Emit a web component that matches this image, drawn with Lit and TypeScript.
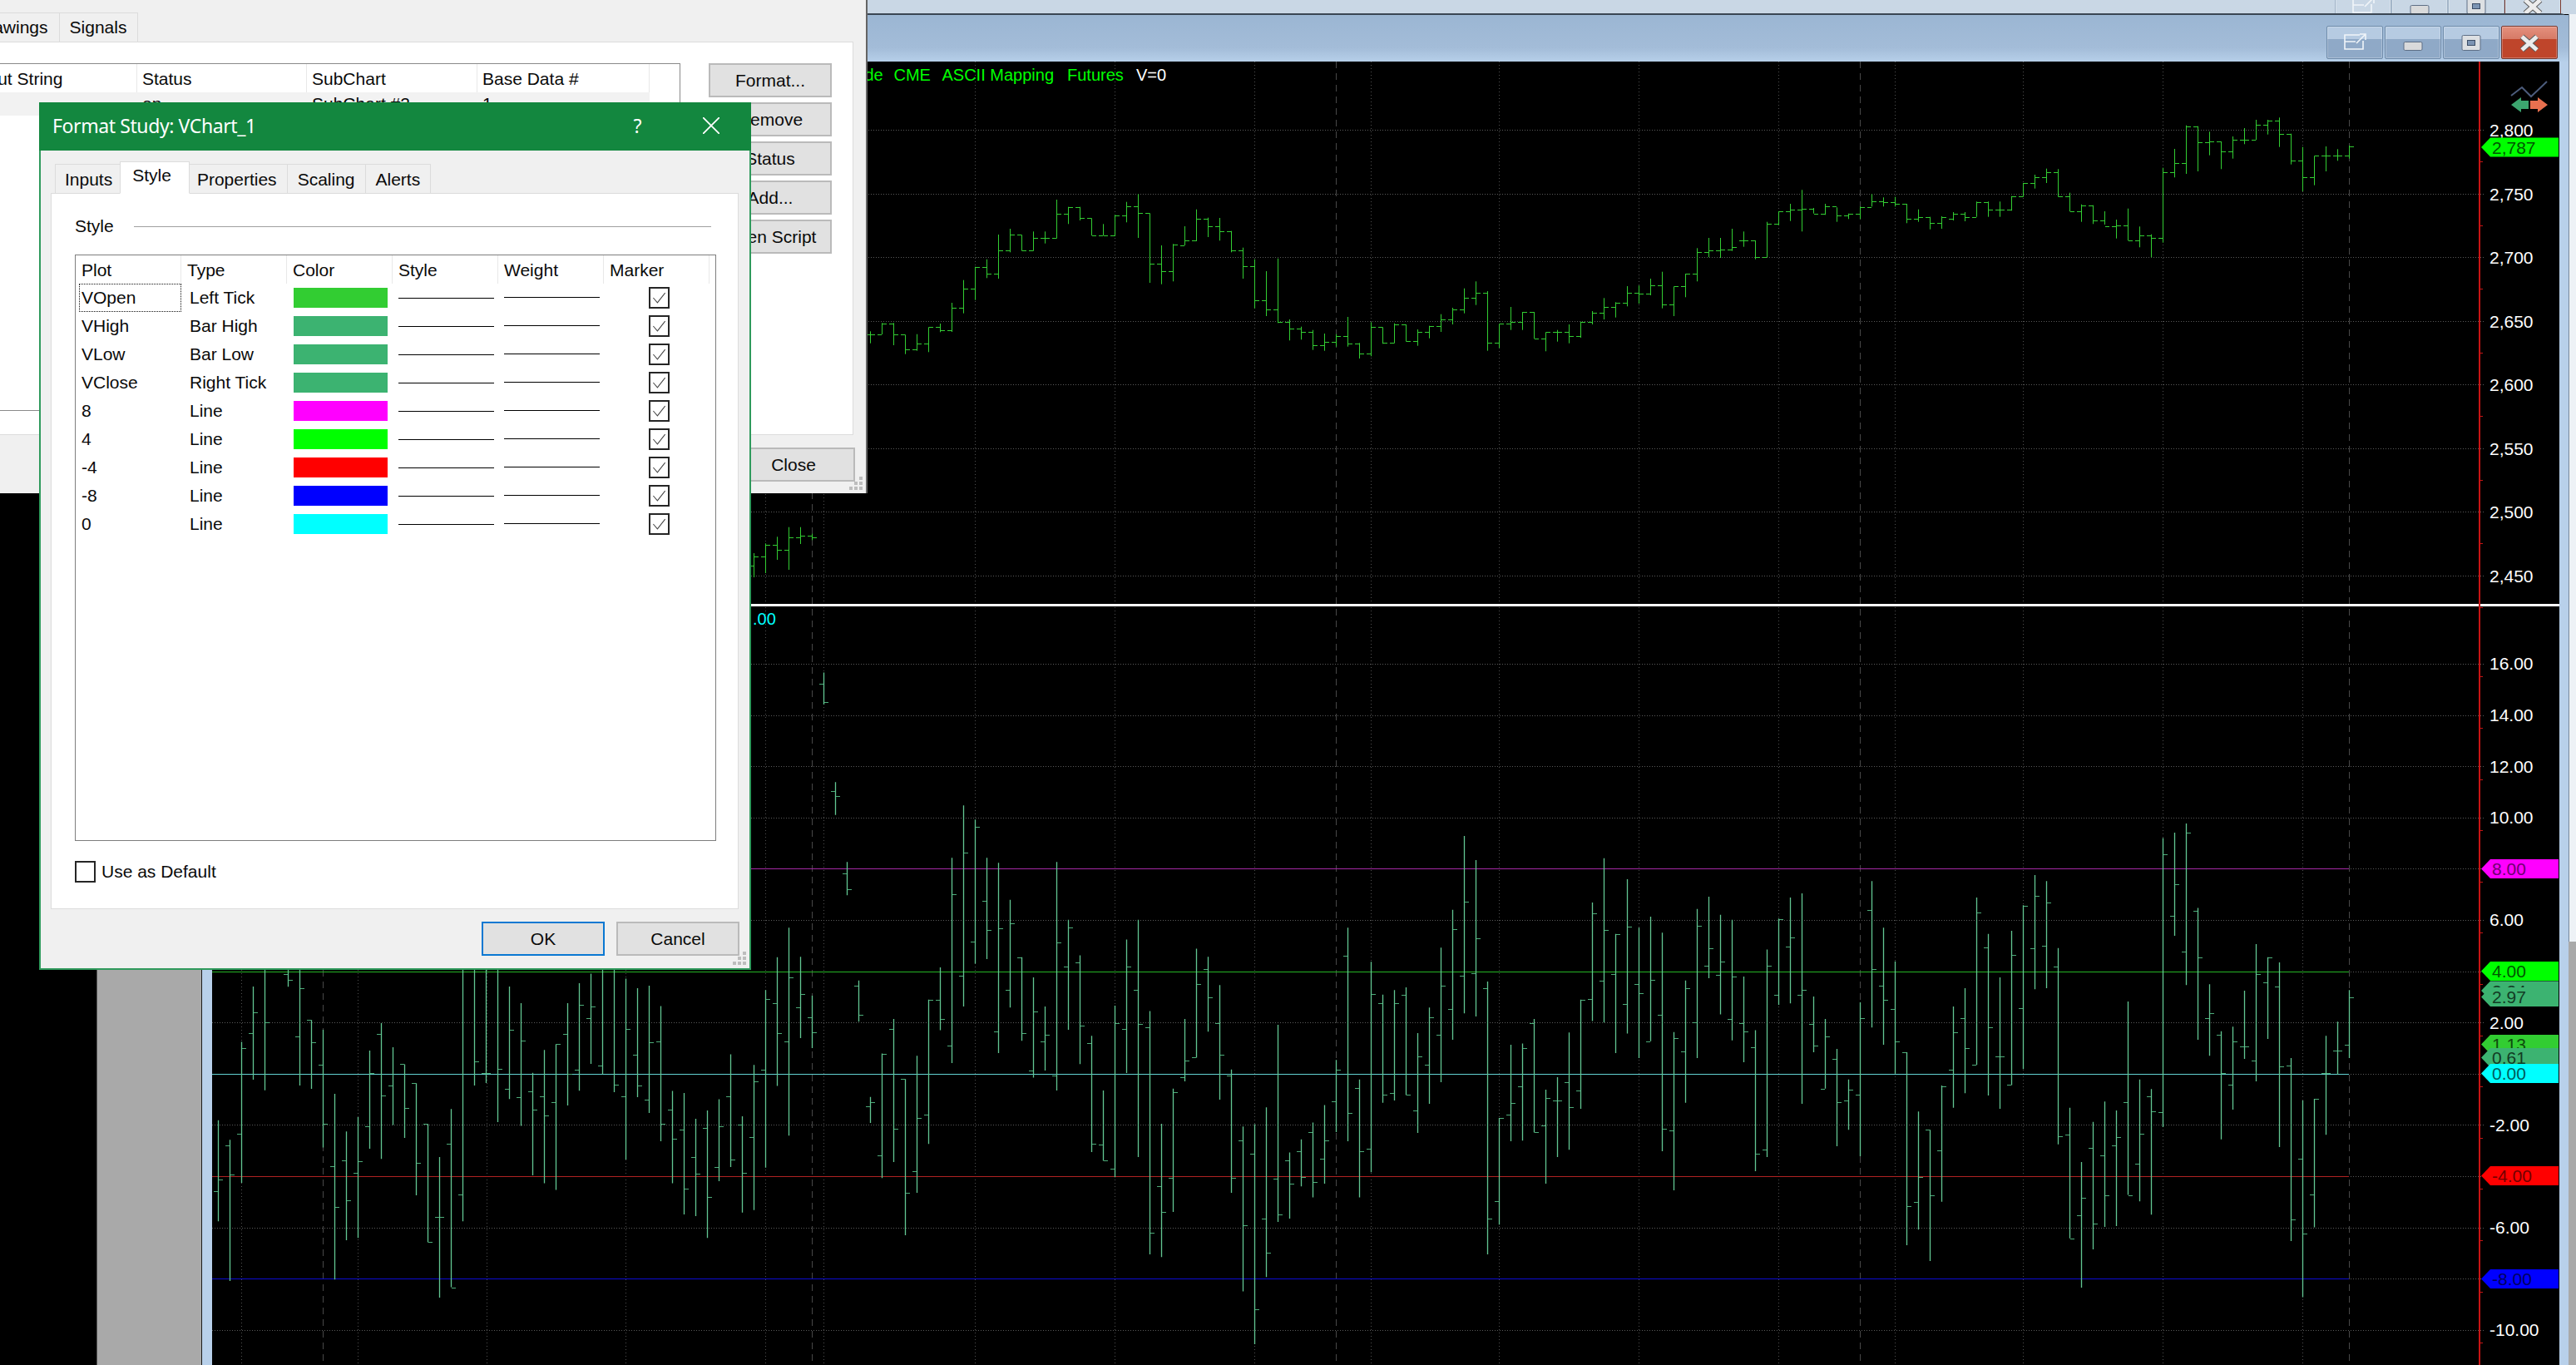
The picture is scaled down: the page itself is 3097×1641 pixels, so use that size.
import { LitElement, html, css, svg } from 'lit';
import { customElement } from 'lit/decorators.js';

// bars are [high, low, left tick, right tick], read off the screenshot.
// one bar every 14px, first bar at x=262
type Bar = number[];

const barX = (i: number) => 262 + 14 * i;

// upper pane, y = value / 3
const PRICE_46: Bar[] = [
  [1995, 2082, 2040, 2007], [1960, 2067, 2007, 1966], [1936, 2019, 1966, 1984], [1901, 2055, 1984, 1939],
  [1901, 1962, 1939, 1931], [1925, 1948, 1931, 1939],
];
const PRICE_56: Bar[] = [
  [1195, 1238, 1207, 1207], [1165, 1206, 1207, 1167], [1165, 1245, 1167, 1207], [1207, 1277, 1207, 1260],
  [1205, 1265, 1259, 1238], [1180, 1270, 1238, 1180], [1167, 1198, 1180, 1190], [1092, 1197, 1190, 1111],
  [1010, 1130, 1111, 1040], [962, 1082, 1040, 962], [935, 1003, 963, 986], [846, 1005, 986, 902],
  [825, 910, 902, 847], [847, 905, 847, 902], [835, 905, 902, 859], [835, 878, 859, 857],
  [720, 860, 857, 772], [746, 808, 772, 746], [746, 795, 746, 787], [787, 850, 787, 848],
  [808, 850, 848, 850], [775, 852, 850, 777], [728, 802, 777, 745], [700, 858, 745, 769],
  [769, 1020, 769, 952], [885, 1025, 952, 979], [880, 1015, 979, 882], [816, 885, 884, 868],
  [755, 870, 868, 790], [785, 855, 790, 815], [786, 868, 815, 833], [833, 910, 833, 902],
  [893, 1005, 902, 961], [935, 1112, 961, 1083], [978, 1140, 1083, 1117], [932, 1165, 1117, 1160],
  [1152, 1228, 1160, 1186], [1178, 1225, 1186, 1196], [1190, 1262, 1196, 1246], [1203, 1265, 1246, 1232],
  [1205, 1250, 1232, 1213], [1143, 1250, 1213, 1238], [1237, 1293, 1238, 1274], [1162, 1285, 1274, 1180],
  [1180, 1240, 1180, 1235], [1166, 1238, 1235, 1170], [1170, 1232, 1170, 1231], [1188, 1247, 1231, 1198],
  [1175, 1220, 1198, 1177], [1133, 1197, 1177, 1153], [1110, 1170, 1153, 1116], [1040, 1130, 1116, 1075],
  [1015, 1100, 1075, 1055], [1050, 1265, 1055, 1237], [1168, 1255, 1237, 1167], [1107, 1190, 1167, 1160],
  [1125, 1190, 1160, 1125], [1125, 1222, 1125, 1222], [1198, 1267, 1222, 1198], [1190, 1232, 1198, 1197],
  [1170, 1238, 1197, 1212], [1160, 1218, 1212, 1162], [1122, 1170, 1162, 1128], [1075, 1152, 1128, 1108],
  [1090, 1145, 1108, 1092], [1032, 1105, 1092, 1057], [1030, 1095, 1057, 1060], [1005, 1065, 1060, 1028],
  [980, 1112, 1028, 1099], [1033, 1140, 1099, 1033], [987, 1072, 1033, 987], [895, 1015, 987, 910],
  [858, 928, 910, 902], [858, 930, 902, 900], [825, 905, 900, 892], [835, 890, 867, 867],
  [867, 935, 867, 927], [800, 928, 927, 808], [762, 812, 808, 762], [735, 797, 762, 757],
  [685, 835, 757, 753], [750, 770, 753, 770], [735, 775, 770, 745], [748, 800, 745, 778],
  [770, 790, 778, 772], [745, 790, 772, 748], [700, 745, 748, 727], [712, 745, 727, 730],
  [710, 745, 730, 735], [735, 805, 735, 790], [755, 800, 790, 782], [782, 827, 782, 805],
  [780, 825, 805, 782], [765, 795, 788, 770], [765, 798, 770, 782], [727, 782, 782, 729],
  [727, 782, 729, 757], [727, 782, 757, 757], [707, 760, 757, 708], [660, 710, 708, 660],
  [630, 680, 660, 638], [608, 660, 638, 621], [610, 710, 621, 708], [695, 763, 708, 763],
  [737, 800, 763, 741], [740, 808, 741, 795], [762, 810, 795, 816], [792, 860, 816, 814],
  [752, 868, 814, 868], [817, 892, 868, 850], [845, 928, 850, 858], [605, 875, 858, 622],
  [537, 640, 622, 589], [452, 627, 589, 457], [455, 618, 457, 513], [475, 560, 513, 510],
  [510, 610, 510, 547], [492, 572, 547, 505], [462, 520, 505, 505], [432, 505, 505, 450],
  [432, 485, 450, 436], [424, 530, 436, 482], [482, 593, 482, 579], [530, 690, 579, 639],
  [562, 668, 639, 562], [528, 618, 562, 562], [538, 580, 562, 562], [525, 572, 562, 528],
];

// lower pane, bars 0..45 (y = 1100 + v / 2.898), mostly behind the dialog
const OSC_0: Bar[] = [
  [715, 1067, 963, 923], [783, 1275, 804, 905], [442, 933, 763, 465], [249, 574, 412, 340],
  [100, 611, 0, 375], [0, 0, 0, 0], [100, 250, 207, 227], [100, 594, 424, 256],
  [366, 606, 366, 444], [400, 810, 523, 726], [623, 1270, 876, 1018], [754, 1133, 856, 995],
  [704, 1125, 897, 859], [472, 814, 737, 550], [377, 850, 415, 630], [461, 732, 595, 0],
  [520, 777, 520, 673], [586, 977, 586, 865], [728, 1140, 728, 1140], [843, 1333, 1053, 1053],
  [676, 1297, 798, 1297], [100, 1067, 975, 0], [100, 594, 0, 511], [100, 585, 550, 550],
  [100, 722, 0, 535], [249, 641, 607, 401], [307, 735, 636, 439], [550, 907, 613, 677],
  [470, 935, 633, 697], [450, 958, 653, 450], [307, 664, 413, 554], [238, 612, 538, 314],
  [204, 519, 360, 320], [100, 555, 525, 0], [100, 617, 0, 590], [222, 852, 633, 398],
  [255, 635, 488, 595], [246, 690, 644, 444], [317, 788, 441, 726], [613, 935, 679, 781],
  [620, 1043, 748, 952], [710, 1049, 842, 900], [681, 1125, 743, 982], [642, 927, 879, 737],
  [485, 878, 633, 853], [701, 1037, 731, 897],
];

// lower pane, bars 46..183 (y = 780 + v / 1.823)
const OSC_46: Bar[] = [
  [912, 1230, 1070, 948], [748, 1137, 923, 767], [676, 958, 777, 843], [611, 1067, 860, 720],
  [675, 853, 785, 757], [760, 875, 808, 840], [52, 122, 76, 117], [292, 364, 311, 322],
  [467, 540, 493, 526], [727, 817, 739, 803], [982, 1039, 1002, 994], [887, 1160, 1111, 888],
  [811, 1125, 833, 1051], [943, 1285, 943, 1193], [892, 1192, 1144, 1029], [769, 1085, 1020, 770],
  [698, 836, 769, 812], [458, 908, 869, 537], [343, 784, 716, 446], [374, 690, 641, 391],
  [458, 680, 552, 617], [469, 886, 838, 612], [550, 786, 748, 601], [676, 859, 676, 843],
  [720, 940, 925, 794], [784, 924, 861, 845], [467, 968, 935, 644], [594, 835, 697, 611],
  [672, 910, 688, 825], [848, 1103, 865, 1084], [968, 1122, 1087, 1122], [782, 1158, 1139, 820],
  [637, 930, 833, 697], [594, 1114, 748, 823], [794, 1327, 829, 1280], [1041, 1333, 1177, 1235],
  [964, 1234, 1160, 972], [811, 948, 938, 902], [657, 896, 896, 734], [675, 839, 701, 763],
  [737, 988, 821, 890], [922, 1192, 935, 1160], [1047, 1408, 1077, 1263], [1042, 1524, 1106, 1448],
  [1005, 1377, 1248, 1323], [824, 1256, 1162, 1239], [1104, 1249, 1122, 1173],
  [1075, 1178, 1101, 1158], [1038, 1202, 1059, 1169], [1000, 1172, 1118, 1078], [901, 1059, 991, 923],
  [611, 1079, 672, 1018], [944, 1202, 963, 1101], [686, 1147, 1095, 756], [758, 995, 777, 978],
  [748, 990, 974, 777], [742, 978, 758, 978], [842, 1061, 1011, 894], [786, 997, 912, 807],
  [655, 950, 845, 739], [572, 857, 789, 615], [410, 799, 717, 554], [463, 806, 711, 635],
  [729, 1327, 743, 1248], [1028, 1262, 1211, 1028], [868, 1079, 1020, 996], [865, 1078, 958, 875],
  [811, 1060, 820, 1060], [966, 1172, 1045, 984], [939, 1114, 990, 990], [841, 1098, 950, 1005],
  [769, 1008, 968, 770], [556, 816, 767, 580], [459, 819, 728, 617], [625, 886, 712, 626],
  [505, 843, 778, 609], [611, 897, 734, 754], [587, 860, 860, 725], [622, 1101, 802, 1051],
  [840, 1187, 1056, 854], [727, 995, 883, 743], [570, 897, 819, 607], [543, 722, 695, 657],
  [583, 801, 714, 685], [594, 858, 812, 719], [718, 906, 821, 838], [836, 1145, 874, 1106],
  [659, 1114, 1097, 694], [591, 780, 759, 592], [545, 777, 652, 633], [536, 997, 759, 747],
  [762, 884, 823, 869], [811, 964, 964, 849], [877, 1090, 898, 994],
  [944, 1054, 989, 967], [775, 1112, 978, 810], [509, 830, 573, 701], [611, 868, 739, 770],
  [685, 931, 790, 860], [884, 1307, 884, 1222], [1014, 1273, 1213, 1157], [1054, 1342, 1054, 1197],
  [957, 1212, 1099, 958], [784, 1006, 922, 840], [744, 974, 810, 875], [545, 912, 912, 577],
  [625, 979, 655, 830], [720, 1008, 894, 894], [618, 956, 956, 670], [562, 921, 787, 563],
  [496, 746, 656, 541], [509, 744, 650, 556], [656, 1086, 697, 1068], [1006, 1292, 1064, 1292],
  [1125, 1400, 1242, 1204], [1037, 1316, 1093, 1259], [992, 1267, 1111, 1197], [1012, 1265, 1089, 1071],
  [773, 1197, 993, 1197], [944, 1211, 1128, 1062], [965, 1240, 980, 1013], [415, 1048, 1015, 450],
  [403, 629, 586, 515], [383, 737, 663, 402], [568, 857, 575, 676], [735, 892, 809, 799],
  [838, 1075, 846, 929], [828, 1010, 956, 860], [749, 899, 871, 871], [647, 948, 902, 712],
  [676, 855, 731, 677], [687, 1092, 741, 916], [897, 1298, 914, 1250], [990, 1421, 1117, 1281],
  [986, 1268, 1195, 987], [848, 1065, 929, 929], [817, 933, 881, 881], [748, 897, 867, 763],
];

function barStems(bars: Bar[], first: number, toY: (v: number) => number) {
  return bars
    .map((b, n) => (b[0] ? `M${barX(first + n) + 0.5} ${toY(b[0]).toFixed(1)}V${toY(b[1]).toFixed(1)}` : ''))
    .join('');
}

function barTicks(bars: Bar[], first: number, toY: (v: number) => number) {
  return bars
    .map((b, n) => {
      const x = barX(first + n);
      const l = b[2] ? `M${x - 5} ${Math.round(toY(b[2])) + 0.5}H${x}` : '';
      const r = b[3] ? `M${x + 1} ${Math.round(toY(b[3])) + 0.5}H${x + 6}` : '';
      return l + r;
    })
    .join('');
}

const topY = (v: number) => v / 3;
const oscY0 = (v: number) => 1100 + v / 2.898;
const oscY = (v: number) => 780 + v / 1.823;
const valueY = (v: number) => 1290.7 - 30.8 * v;

const PRICE_STEMS = barStems(PRICE_46, 46, topY) + barStems(PRICE_56, 56, topY);
const PRICE_TICKS = barTicks(PRICE_46, 46, topY) + barTicks(PRICE_56, 56, topY);
const OSC_STEMS = barStems(OSC_0, 0, oscY0) + barStems(OSC_46, 46, oscY);
const OSC_TICKS = barTicks(OSC_0, 0, oscY0) + barTicks(OSC_46, 46, oscY);

const PRICE_LEVELS = [
  ['2,800', 156], ['2,750', 233], ['2,700', 309], ['2,650', 386],
  ['2,600', 462], ['2,550', 539], ['2,500', 615], ['2,450', 692],
] as [string, number][];
const OSC_LEVELS = [16, 14, 12, 10, 8, 6, 4, 2, 0, -2, -4, -6, -8, -10];
const GRID_X = [290, 430, 585, 752, 920, 990, 1172, 1340, 1508, 1648, 1802, 1970, 2138, 2278, 2432, 2600, 2768];
const SESSION_X = [388, 976, 1606, 2236, 2824];

const LEVEL_LINES = [
  [8, '#a52aa5'], [4, '#25b525'], [0, '#62d2d2'], [-4, '#b02222'], [-8, '#0c0cd0'],
] as [number, string][];

const TAGS = [
  ['2,787', 177, '#00ff00', '#005500'],
  ['8.00', 1044.5, '#ff00ff', '#700070'],
  ['4.00', 1167.5, '#00ff00', '#005500'],
  ['3.24', 1191, '#3cb371', '#123c24'],
  ['2.97', 1198.5, '#3cb371', '#123c24'],
  ['1.13', 1255.5, '#32cd32', '#0e4a0e'],
  ['0.61', 1271.5, '#3cb371', '#123c24'],
  ['0.00', 1290.5, '#00ffff', '#005a5a'],
  ['-4.00', 1413.5, '#ff0000', '#700000'],
  ['-8.00', 1537.5, '#0000ff', '#000060'],
] as [string, number, string, string][];

const PLOTS = [
  ['VOpen', 'Left Tick', '#32cd32'],
  ['VHigh', 'Bar High', '#3cb371'],
  ['VLow', 'Bar Low', '#3cb371'],
  ['VClose', 'Right Tick', '#3cb371'],
  ['8', 'Line', '#ff00ff'],
  ['4', 'Line', '#00ff00'],
  ['-4', 'Line', '#ff0000'],
  ['-8', 'Line', '#0000ff'],
  ['0', 'Line', '#00ffff'],
];

const check = svg`<svg class="tick" viewBox="0 0 25 26"><path d="M4 13L10 20L21 6" /></svg>`;

const grip = html`<svg class="grip" width="18" height="18">
  <path d="M12 0h4v4h-4zM6 6h4v4h-4zM12 6h4v4h-4zM0 12h4v4h-4zM6 12h4v4h-4zM12 12h4v4h-4z" />
</svg>`;

const winIcons = {
  popout: svg`<path d="M40 11H22V28H44V18M22 19H35" fill="none" stroke="#f1f5f9" stroke-width="1.6" />
    <path d="M36 21L46 11M40 10H47V17" fill="none" stroke="#f1f5f9" stroke-width="1.6" />`,
  min: svg`<rect x="23" y="19.5" width="22" height="10" rx="1.5" fill="#d9dadb" stroke="#5e6f86" />`,
  max: svg`<rect x="23" y="11.5" width="22" height="18" rx="1.5" fill="#dde0e3" stroke="#5e6f86" />
    <rect x="29.5" y="17.5" width="9" height="6" fill="#7c94b3" stroke="#3c4d66" />`,
  close: svg`<path d="M25 13L43 29M43 13L25 29" stroke="#5b5b5b" stroke-width="7" />
    <path d="M25 13L43 29M43 13L25 29" stroke="#ececec" stroke-width="5" />`,
};

const winButton = (kind: keyof typeof winIcons) =>
  html`<div class="win-btn ${kind}"><svg width="68" height="40">${winIcons[kind]}</svg></div>`;

const winButtons = html`${winButton('popout')}${winButton('min')}${winButton('max')}${winButton('close')}`;

@customElement('app-root')
export class AppRoot extends LitElement {
  static styles = css`
    :host {
      display: block;
      position: relative;
      width: 3097px;
      height: 1641px;
      background: #000;
      overflow: hidden;
      font-family: 'Liberation Sans', Arial, sans-serif;
      font-size: 21px;
      color: #0a0a0a;
    }

    /* desktop windows */
    .band {
      position: absolute;
      left: 1041px;
      top: 0;
      right: 0;
      height: 17px;
      background: #c9d7e5;
      display: flex;
      justify-content: flex-end;
      padding-right: 18px;
      overflow: hidden;
    }
    .band .win-btn {
      margin-top: -13px;
      background: none;
      border: 1px solid #a3b5c8;
      border-radius: 0;
    }
    .band .win-btn.close {
      background: none;
    }

    .chart-window {
      position: absolute;
      left: 243px;
      top: 16px;
      right: 9px;
      bottom: 0;
      display: flex;
      flex-direction: column;
      padding: 0 11px 0 12px;
      background: #b8d0ea;
      border-top: 2px solid #3a4653;
      border-top-right-radius: 10px;
    }
    .title-bar {
      height: 56px;
      flex: none;
      margin: 0 -11px 0 -12px;
      padding: 13px 13px 0 0;
      box-sizing: border-box;
      display: flex;
      justify-content: flex-end;
      gap: 2px;
      background: linear-gradient(#9bb6d3, #a3bcd8 70%, #b6cfe9);
    }
    .win-btn {
      width: 68px;
      height: 40px;
      box-sizing: border-box;
      border: 1px solid #6f8cab;
      border-radius: 2px;
      background: linear-gradient(#b6cbe2 0 40%, #8fa9c7 40%);
      box-shadow: inset 0 0 0 1px rgba(255, 255, 255, 0.25);
    }
    .win-btn svg {
      display: block;
      margin: -1px;
    }
    .win-btn.close {
      border-color: #7a3a30;
      background: linear-gradient(#e4907e, #d67a66 40%, #bf452b 40%);
    }
    .chart {
      display: block;
      flex: 1;
      min-height: 0;
      background: #000;
    }

    .chart .dots-h {
      stroke: #5a5a5a;
      stroke-width: 1;
      stroke-dasharray: 1 2;
      fill: none;
    }
    .chart .dots-v {
      stroke: #505050;
      stroke-width: 1;
      stroke-dasharray: 1 3;
      fill: none;
    }
    .chart .dash-v {
      stroke: #484848;
      stroke-width: 1;
      stroke-dasharray: 8 6;
      fill: none;
    }
    .chart .price-bars {
      stroke: #32cd32;
      stroke-width: 1;
      fill: none;
    }
    .chart .osc-bars {
      stroke: #62c692;
      stroke-width: 1.3;
      fill: none;
    }
    .chart .osc-ticks {
      stroke: #4cab78;
      stroke-width: 1;
      fill: none;
    }
    .chart .axis-ticks {
      stroke: #c81414;
      stroke-width: 1;
      fill: none;
    }
    .chart text {
      font-size: 21px;
      fill: #fff;
    }
    .chart .legend {
      font-size: 20px;
      fill: #00ff00;
    }
    .chart .legend.white {
      fill: #fff;
    }
    .chart .legend.cyan {
      fill: #00ffff;
    }

    .gutter {
      position: absolute;
      left: 116px;
      width: 125px;
      top: 1000px;
      bottom: 0;
      background: #a9a9a9;
      border-left: 1px solid #555;
      border-right: 1px solid #1c1c1c;
    }
    .edge {
      position: absolute;
      right: 0;
      top: 17px;
      width: 8px;
      height: 1115px;
      background: #eef2f6;
      border-left: 1px solid #76879a;
    }
    .edge-low {
      position: absolute;
      right: 0;
      top: 1132px;
      bottom: 0;
      width: 9px;
      background: #a9a9a9;
    }

    /* dialog shared */
    .btn {
      display: flex;
      align-items: center;
      justify-content: center;
      box-sizing: border-box;
      width: 148px;
      height: 41px;
      background: #e1e1e1;
      border: 2px solid #bababa;
    }
    .btn.default {
      border-color: #0a78d2;
    }
    .grip {
      position: absolute;
      right: 2px;
      bottom: 2px;
      fill: #bdbdbd;
    }

    /* study list dialog, partly off screen on the left */
    .studies {
      position: absolute;
      left: -170px;
      top: 0;
      width: 1211px;
      height: 593px;
      background: #f0f0f0;
      border-right: 2px solid #646464;
    }
    .studies .tabs {
      display: flex;
      height: 35px;
      margin-top: 15px;
      padding-left: 127px;
      box-sizing: border-box;
      position: absolute;
      top: 0;
    }
    .studies .tab {
      display: flex;
      align-items: center;
      padding: 0 13px 0 12px;
      border: 1px solid #dcdcdc;
      border-bottom: none;
      margin-right: -1px;
    }
    .studies .sheet {
      position: absolute;
      left: 0;
      top: 50px;
      width: 1196px;
      height: 473px;
      box-sizing: border-box;
      background: #fff;
      border: 1px solid #dcdcdc;
      padding: 25px 0 0 70px;
      display: flex;
      gap: 34px;
    }
    .studies .list {
      width: 917px;
      height: 418px;
      box-sizing: border-box;
      border: 1px solid #8a8a8a;
    }
    .studies .head,
    .studies .row {
      display: grid;
      grid-template-columns: 263px 204px 205px 207px;
    }
    .studies .head > div {
      height: 34px;
      line-height: 36px;
      padding-left: 6px;
      box-sizing: border-box;
      border-right: 1px solid #e8e8e8;
    }
    .studies .head > div:first-child {
      padding-left: 66px;
    }
    .studies .row {
      height: 28px;
      width: 879px;
      background: #f2f2f2;
      line-height: 28px;
    }
    .studies .row > div {
      padding-left: 6px;
    }
    .studies .side {
      display: flex;
      flex-direction: column;
      gap: 6px;
    }
    .studies .foot {
      position: absolute;
      right: 13px;
      top: 538px;
    }

    /* format study dialog */
    .format {
      position: absolute;
      left: 47px;
      top: 123px;
      width: 856px;
      height: 1043px;
      box-sizing: border-box;
      background: #f0f0f0;
      border: 2px solid #2f9a5c;
      border-top: none;
    }
    .format .title {
      height: 58px;
      margin: 0 -2px;
      background: #13873f;
      color: #fff;
      display: flex;
      align-items: center;
      padding: 0 38px 2px 16px;
      box-sizing: border-box;
      font-family: 'Noto Sans', sans-serif;
      font-size: 23px;
      letter-spacing: -0.4px;
    }
    .format .title .name {
      flex: 1;
    }
    .format .title .help {
      margin-right: 74px;
    }
    .format .tabs {
      display: flex;
      align-items: flex-end;
      height: 39px;
      margin: 13px 0 -1px 17px;
      position: relative;
    }
    .format .tab {
      display: flex;
      align-items: center;
      height: 36px;
      padding: 2px 12px 0;
      background: #f0f0f0;
      border: 1px solid #dcdcdc;
      margin-right: -1px;
      box-sizing: border-box;
    }
    .format .tab.first {
      padding-left: 11px;
      padding-right: 9px;
    }
    .format .tab.on {
      height: 39px;
      padding: 0 21px 5px 14px;
      background: #fff;
      border-bottom-color: #fff;
      position: relative;
      z-index: 1;
    }
    .format .tab.wide {
      padding-left: 9px;
    }
    .format .sheet {
      width: 827px;
      height: 861px;
      margin-left: 12px;
      box-sizing: border-box;
      background: #fff;
      border: 1px solid #dcdcdc;
      padding: 27px 26px 0 28px;
    }
    .format .group {
      display: flex;
      align-items: center;
      gap: 24px;
      height: 24px;
      margin-right: 6px;
    }
    .format .group hr {
      flex: 1;
      margin: 0;
      border: none;
      border-top: 1px solid #a0a0a0;
    }
    .format .plots {
      height: 705px;
      margin-top: 22px;
      box-sizing: border-box;
      border: 1px solid #7e7e7e;
    }
    .format .plot-row {
      display: grid;
      grid-template-columns: repeat(6, 127px);
      height: 34px;
      align-items: center;
    }
    .format .plot-head > div {
      height: 34px;
      line-height: 36px;
      padding-left: 7px;
      box-sizing: border-box;
      border-right: 1px solid #e8e8e8;
    }
    .format .name-cell {
      padding-left: 7px;
      height: 34px;
      line-height: 34px;
      box-sizing: border-box;
    }
    .format .name-cell.focus {
      margin-left: 4px;
      padding-left: 2px;
      border: 1px dotted #111;
      line-height: 32px;
    }
    .format .type-cell {
      padding-left: 10px;
    }
    .format .swatch {
      width: 113px;
      height: 24px;
      margin-left: 8px;
    }
    .format .line {
      width: 115px;
      margin-left: 7px;
      border-top: 1px solid #000;
    }
    .format .line.weight {
      margin-top: -2px;
    }
    .box {
      width: 25px;
      height: 26px;
      box-sizing: border-box;
      border: 2px solid #262626;
      background: #fff;
    }
    .plot-row .box {
      margin-left: 54px;
    }
    .tick {
      display: block;
      width: 21px;
      height: 22px;
      fill: none;
      stroke: #444;
      stroke-width: 1.2;
    }
    .format .default-row {
      display: flex;
      align-items: center;
      gap: 7px;
      margin-top: 24px;
    }
    .format .actions {
      display: flex;
      justify-content: flex-end;
      gap: 14px;
      margin: 15px 12px 0 0;
    }
  `;

  private renderChart() {
    const gridH = [...PRICE_LEVELS.map((l) => l[1]), ...OSC_LEVELS.map(valueY)];
    const minorTop = PRICE_LEVELS.map((l) => l[1] + 38);
    const minorLow = OSC_LEVELS.map((v) => valueY(v) + 15.4);
    return html`<svg class="chart" viewBox="255 74 2822 1567" preserveAspectRatio="none">
      ${GRID_X.map((x) => svg`<path class="dots-v" d="M${x + 0.5} 74V1641" />`)}
      ${SESSION_X.map((x) => svg`<path class="dash-v" d="M${x + 0.5} 74V1641" />`)}
      ${gridH.map((y) => svg`<path class="dots-h" d="M255 ${Math.round(y) + 0.5}H2986" />`)}

      <path class="price-bars" d=${PRICE_STEMS + PRICE_TICKS} />

      ${LEVEL_LINES.map(
        ([v, color]) => svg`<path d="M255 ${Math.round(valueY(v)) + 0.5}H2824" stroke=${color} stroke-width="1" />`,
      )}
      <path class="osc-bars" d=${OSC_STEMS} />
      <path class="osc-ticks" d=${OSC_TICKS} />

      <rect x="255" y="726" width="2822" height="3" fill="#fff" />

      <rect x="2980" y="74" width="2" height="1567" fill="#c81414" />
      <path
        class="axis-ticks"
        d=${[...minorTop, ...minorLow].map((y) => `M2982 ${Math.round(y) + 0.5}h3`).join('')}
      />

      <path d="M3019 115L3032 105L3043 116L3062 98" fill="none" stroke="#4c5c7c" stroke-width="2" />
      <path d="M3019 126L3031 117V121H3040V131H3031V135Z" fill="#3ca56f" />
      <path d="M3042 121H3051V117L3063 126L3051 135V131H3042Z" fill="#e8704f" />

      ${PRICE_LEVELS.map(([t, y]) => svg`<text x="2993" y=${y + 7.5}>${t}</text>`)}
      ${OSC_LEVELS.filter((v) => ![8, 4, 0, -4, -8].includes(v)).map(
        (v) => svg`<text x="2993" y=${valueY(v) + 7.5}>${v.toFixed(2)}</text>`,
      )}
      ${TAGS.map(
        ([t, y, fill, ink]) => svg`
          <path d="M2983 ${y}L2994 ${y - 11.5}H3076V${y + 11.5}H2994Z" fill=${fill} />
          <text x="2996" y=${y + 7.5} style="fill:${ink}">${t}</text>`,
      )}

      <text class="legend" x="1039.5" y="97">de</text>
      <text class="legend" x="1074.5" y="97">CME</text>
      <text class="legend" x="1132.5" y="97">ASCII Mapping</text>
      <text class="legend" x="1283" y="97">Futures</text>
      <text class="legend white" x="1366" y="97">V=0</text>
      <text class="legend cyan" x="905" y="750.5">.00</text>
    </svg>`;
  }

  private renderStudies() {
    return html`<section class="studies">
      <div class="tabs">
        <div class="tab">Drawings</div>
        <div class="tab">Signals</div>
      </div>
      <div class="sheet">
        <div class="list">
          <div class="head">
            <div>Input String</div>
            <div>Status</div>
            <div>SubChart</div>
            <div>Base Data #</div>
          </div>
          <div class="row">
            <div></div>
            <div>on</div>
            <div>SubChart #2</div>
            <div>1</div>
          </div>
        </div>
        <div class="side">
          <div class="btn">Format...</div>
          <div class="btn">Remove</div>
          <div class="btn">Status</div>
          <div class="btn">Add...</div>
          <div class="btn">Open Script</div>
        </div>
      </div>
      <div class="foot"><div class="btn">Close</div></div>
      ${grip}
    </section>`;
  }

  private renderFormat() {
    return html`<section class="format">
      <div class="title">
        <span class="name">Format Study: VChart_1</span>
        <span class="help">?</span>
        <svg width="20" height="20" viewBox="0 0 20 20">
          <path d="M0 0L20 20M20 0L0 20" stroke="#fff" stroke-width="1.8" />
        </svg>
      </div>
      <div class="tabs">
        <div class="tab first">Inputs</div>
        <div class="tab on">Style</div>
        <div class="tab wide">Properties</div>
        <div class="tab">Scaling</div>
        <div class="tab">Alerts</div>
      </div>
      <div class="sheet">
        <div class="group"><span>Style</span><hr /></div>
        <div class="plots">
          <div class="plot-row plot-head">
            <div>Plot</div>
            <div>Type</div>
            <div>Color</div>
            <div>Style</div>
            <div>Weight</div>
            <div>Marker</div>
          </div>
          ${PLOTS.map(
            ([name, type, color], i) => html`<div class="plot-row">
              <div class="name-cell ${i === 0 ? 'focus' : ''}">${name}</div>
              <div class="type-cell">${type}</div>
              <div class="swatch" style="background:${color}"></div>
              <div class="line"></div>
              <div class="line weight"></div>
              <div class="box">${check}</div>
            </div>`,
          )}
        </div>
        <div class="default-row">
          <div class="box"></div>
          <span>Use as Default</span>
        </div>
      </div>
      <div class="actions">
        <div class="btn default">OK</div>
        <div class="btn">Cancel</div>
      </div>
      ${grip}
    </section>`;
  }

  render() {
    return html`
      <div class="band">${winButtons}</div>
      <div class="chart-window">
        <div class="title-bar">${winButtons}</div>
        ${this.renderChart()}
      </div>
      <div class="gutter"></div>
      <div class="edge"></div>
      <div class="edge-low"></div>
      ${this.renderStudies()} ${this.renderFormat()}
    `;
  }
}
